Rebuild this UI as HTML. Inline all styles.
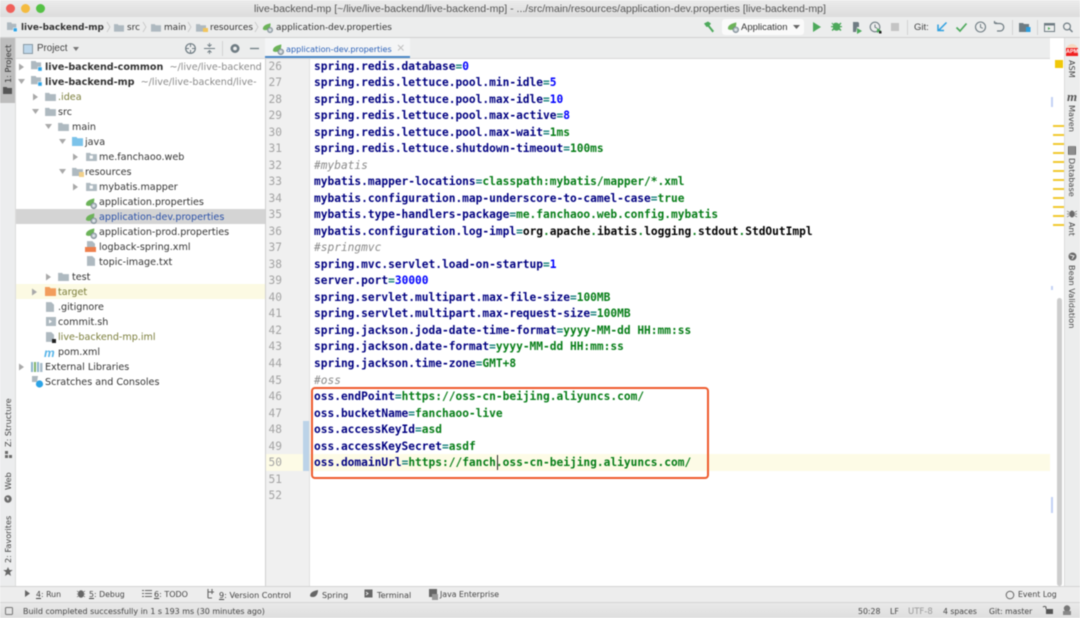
<!DOCTYPE html>
<html lang="en"><head><meta charset="utf-8"><title>IDE</title>
<style>
html,body{margin:0;padding:0;width:1080px;height:618px;overflow:hidden;background:#fff}
#r{position:relative;width:1080px;height:618px;overflow:hidden;filter:blur(.4px);font-family:"DejaVu Sans",sans-serif;font-size:9.6px;color:#333}
.a{position:absolute}
.t{position:absolute;white-space:pre;line-height:14px;height:14px}
.s{font-size:8.9px}
.u{font-size:8.1px;color:#444}
.w{font-size:7.8px;color:#444}
.c{position:absolute;left:314px;margin-top:.7px;white-space:pre;font:bold 11.2px/16px "DejaVu Sans Mono",monospace;color:#000080}
.n{position:absolute;width:26px;left:256px;margin-top:.7px;text-align:right;font:11.2px/16px "DejaVu Sans Mono",monospace;color:#a3a3a3}
.g{color:#067d17}.b{color:#0000ff}.k{color:#000}.e{color:#16807a}
.h{font-weight:normal;font-style:italic;color:#8a8a8a}
.v{position:absolute;white-space:pre;transform-origin:0 0;line-height:12px;font-size:8.15px;color:#444}
.m{position:absolute;left:1053px;width:11px;height:2px;background:#f2c92e}
svg{position:absolute;overflow:visible}
</style></head><body><div id="r">
<svg width="0" height="0" style="position:absolute"><defs>
<symbol id="f" viewBox="0 0 12 10"><path d="M0 1h4.500l1 1.300H12V10H0z" fill="#aeb9c0"/></symbol>
<symbol id="l" viewBox="0 0 13 13"><path d="M1 8.500C1 4 5 3 10 1.500 10.500 5 9 9 5.500 9.500 3.500 9.800 2 9.600 1 8.500z" fill="#6cb359"/><circle cx="9.500" cy="9.500" r="3" fill="#b9c3c9" stroke="#77858e" stroke-width=".9"/><circle cx="9.500" cy="9.500" r=".9" fill="#fff"/></symbol>
<symbol id="mod" viewBox="0 0 13 12"><path d="M0 0h5l1 1.500h5V9H0z" fill="#aeb9c0"/><rect x="7.500" y="6.500" width="4.500" height="4.500" fill="#2ba3e6" stroke="#fff" stroke-width=".6"/></symbol>
<symbol id="pk" viewBox="0 0 12 10"><path d="M0 1h4.500l1 1.300H12V10H0z" fill="#aeb9c0"/><rect x="4" y="4" width="3.500" height="3.500" fill="#fff"/></symbol>
<symbol id="doc" viewBox="0 0 9 11"><path d="M0 0h6l3 3v8H0z" fill="#aeb9c0"/></symbol>
</defs></svg>

<!-- title bar -->
<div class="a" style="left:0;top:0;width:1080px;height:17px;background:linear-gradient(#ececec,#dcdcdc)"></div>
<div class="a" style="left:6px;top:4px;width:9px;height:9px;border-radius:50%;background:#f0605a"></div>
<div class="a" style="left:21px;top:4px;width:9px;height:9px;border-radius:50%;background:#f4bb3f"></div>
<div class="a" style="left:36px;top:4px;width:9px;height:9px;border-radius:50%;background:#55c145"></div>
<div class="t" style="left:254px;top:2px;font:10.54px/14px 'Liberation Sans',sans-serif;color:#555;">live-backend-mp [~/live/live-backend/live-backend-mp] - .../src/main/resources/application-dev.properties [live-backend-mp]</div>

<!-- nav bar -->
<div class="a" style="left:0;top:17px;width:1080px;height:21px;background:#eceded;border-bottom:1px solid #d0d0d0;box-sizing:border-box"></div>
<svg style="left:7px;top:22px" width="11" height="11"><use href="#mod" width="11" height="11"/></svg>
<div class="t s" style="left:21px;top:21px;font-weight:bold;">live-backend-mp</div>
<svg style="left:114px;top:23px" width="10" height="9"><use href="#f" width="10" height="9"/></svg>
<div class="t s" style="left:127px;top:21px">src</div>
<svg style="left:151px;top:23px" width="10" height="9"><use href="#f" width="10" height="9"/></svg>
<div class="t s" style="left:164px;top:21px">main</div>
<svg style="left:196px;top:23px" width="10" height="9"><use href="#f" width="10" height="9"/></svg>
<div class="a" style="left:203px;top:28px;width:5px;height:4px;background:#f2c55c"></div>
<div class="t s" style="left:210px;top:21px">resources</div>
<svg style="left:262px;top:22px" width="11" height="11"><use href="#l" width="11" height="11"/></svg>
<div class="t s" style="left:276px;top:21px">application-dev.properties</div>
<svg style="left:0;top:0" width="270" height="38" fill="none" stroke="#c4c4c4" stroke-width=".8"><path d="M107 22l3 5-3 5M143 22l3 5-3 5M188 22l3 5-3 5M255 22l3 5-3 5"/></svg>

<!-- toolbar right -->
<svg style="left:702px;top:20px" width="14" height="14"><path d="M2 3.500L6 1.500l3 2-1.500 2L12 11l-1.500 1.500L6 6.800 4.500 7z" fill="#4da95b"/></svg>
<div class="a" style="left:722px;top:19px;width:82px;height:16px;background:#fafafa;border-radius:3px"></div>
<svg style="left:727px;top:21px" width="12" height="12"><use href="#l" width="12" height="12"/></svg>
<div class="t" style="left:741px;top:21px;font:9.5px/14px 'Liberation Sans',sans-serif;color:#333">Application</div>
<svg style="left:793px;top:25px" width="8" height="5"><path d="M0 0h7L3.500 4z" fill="#666"/></svg>
<svg style="left:0;top:0" width="1080" height="38">
<path d="M813 22v10l8-5z" fill="#4da95b"/>
<path d="M833 24a4 4 0 0 1 6 0l1.500-1.500 1 1-1.500 1.500v1h2v1.200h-2v1.300l1.500 1.500-1 1-1.500-1.200a4 4 0 0 1-5 0l-1.500 1.200-1-1 1.500-1.500v-1.300h-2v-1.200h2v-1l-1.500-1.500 1-1z" fill="#4da95b"/>
<path d="M853 22h5l1 1v4h-2l-1 5h-3z" fill="#6f7c83"/><path d="M857 28v6l5-3z" fill="#4da95b"/>
<circle cx="875" cy="27" r="4.800" fill="none" stroke="#6f7c83" stroke-width="1.100"/><path d="M875 24.500v2.700l2 1" fill="none" stroke="#6f7c83"/><path d="M877 28v5l4-2.500z" fill="#4da95b"/><rect x="879" y="31" width="2.500" height="2.500" fill="#222"/>
<rect x="891" y="23" width="8" height="8" fill="#c4c4c4"/>
<rect x="907" y="20" width="1" height="15" fill="#d2d2d2"/>
<path d="M946.500 22.500l-8 8M938 24.500v6h6" fill="none" stroke="#2d9fe0" stroke-width="1.500"/>
<path d="M956.500 27.500l3.500 3.500 6.500-7.500" fill="none" stroke="#4da95b" stroke-width="1.700"/>
<circle cx="980.500" cy="27" r="5" fill="none" stroke="#6f7c83" stroke-width="1.100"/><path d="M980.500 24v3.300l2.300 1" fill="none" stroke="#6f7c83"/>
<path d="M997 23h-2.500v-2M995 23.500h5a3.600 3.600 0 0 1 0 7.500h-3" fill="none" stroke="#6f7c83" stroke-width="1.200"/>
<rect x="1012" y="20" width="1" height="15" fill="#d2d2d2"/>
<path d="M1019 23h4l1 1h5v8h-10z" fill="#6f7c83"/><rect x="1026" y="27" width="4.500" height="5" fill="#2d9fe0"/>
<rect x="1037" y="20" width="1" height="15" fill="#d2d2d2"/>
<rect x="1044.500" y="23.500" width="10" height="8" fill="none" stroke="#6f7c83"/><rect x="1044.500" y="23.500" width="10" height="2" fill="#6f7c83"/><path d="M1048 27v3l2.500-1.500z" fill="#4da95b"/>
<circle cx="1067" cy="26.500" r="3.400" fill="none" stroke="#6f7c83" stroke-width="1.200"/><path d="M1069.500 29l3 3" stroke="#6f7c83" stroke-width="1.400"/>
</svg>
<div class="t" style="left:914px;top:21px;font:9.500px/14px 'Liberation Sans',sans-serif;color:#444">Git:</div>

<!-- left strip -->
<div class="a" style="left:0;top:38px;width:16px;height:549px;background:#ecedee;border-right:1px solid #dcdcdc;box-sizing:border-box"></div>
<div class="a" style="left:0;top:38px;width:15px;height:65px;background:#bdbdbd"></div>
<div class="v" style="left:2px;top:83px;transform:rotate(-90deg);color:#333">1: Project</div>
<svg style="left:3px;top:87px" width="9" height="7"><path d="M0 0h3.500l1 1H9v6H0z" fill="#555"/></svg>
<div class="v" style="left:2px;top:447px;transform:rotate(-90deg)">Z: Structure</div>
<svg style="left:5px;top:451px" width="7" height="7" fill="#6b6b6b"><rect width="3" height="3"/><rect y="4" width="3" height="3"/><rect x="4" y="4" width="3" height="3"/></svg>
<div class="v" style="left:2px;top:490px;transform:rotate(-90deg)">Web</div>
<svg style="left:4px;top:495px" width="8" height="8"><circle cx="4" cy="4" r="3.700" fill="#6b6b6b"/><path d="M2 2l3 1-1 3z" fill="#eee"/></svg>
<div class="v" style="left:2px;top:563px;transform:rotate(-90deg)">2: Favorites</div>
<svg style="left:3px;top:567px" width="10" height="9"><path d="M5 0l1.400 3h3.300L7 5.200 8 9 5 7 2 9l1-3.800L.3 3h3.300z" fill="#666"/></svg>

<!-- project panel header -->
<div class="a" style="left:16px;top:38px;width:249px;height:21px;background:#eceded"></div>
<svg style="left:23px;top:44px" width="10" height="10"><rect x=".5" y=".5" width="9" height="9" fill="#bcd6ea" stroke="#8a9aa5"/></svg>
<div class="t" style="left:37px;top:42px;font:9.800px/14px 'Liberation Sans',sans-serif;color:#444">Project</div>
<svg style="left:73px;top:47px" width="8" height="5"><path d="M0 0h6L3 4z" fill="#777"/></svg>
<svg style="left:0;top:0" width="270" height="60" fill="none" stroke="#6f7c83">
<circle cx="190.500" cy="48.500" r="4.800" stroke-width="1.200"/><path d="M190.500 44v3M190.500 50v3M186 48.500h3M192 48.500h3" />
<path d="M204 48.500h11M209.500 43v3M207.500 44.500l2 2 2-2M209.500 54v-3M207.500 52.500l2-2 2 2" stroke-width=".9"/>
<path d="M222.500 41v15" stroke="#d2d2d2"/>
<circle cx="235" cy="48.500" r="3.200" stroke-width="2.600"/>
<path d="M250 48.500h9" stroke-width="1.300"/></svg>
<div class="a" style="left:265px;top:38px;width:785px;height:21px;background:#eceded"></div>
<div class="a" style="left:16px;top:58px;width:1034px;height:1px;background:#d8d8d8"></div>

<!-- tab -->
<div class="a" style="left:265px;top:38px;width:145px;height:20px;background:#f4f5f6"></div>
<div class="a" style="left:265px;top:56px;width:145px;height:2px;background:#4a88c7"></div>
<svg style="left:272px;top:43px" width="12" height="12"><use href="#l" width="12" height="12"/></svg>
<div class="t" style="left:286px;top:42px;color:#2a60b8;font-size:8.1px">application-dev.properties</div>
<svg style="left:397px;top:44px" width="8" height="8"><path d="M1 1l5.500 5.500M6.500 1L1 6.500" stroke="#c0c0c0"/></svg>

<!-- tree -->
<div class="a" style="left:16px;top:59px;width:249px;height:528px;background:#fff"></div>
<div class="a" style="left:16px;top:209px;width:249px;height:15px;background:#d4d4d4"></div>
<div class="a" style="left:16px;top:284px;width:249px;height:15px;background:#fcfae3"></div>
<svg style="left:0;top:0" width="270" height="400" fill="#a9a9a9">
<path d="M19 63.500l5 3.500-5 3.500zM33 93.500l5 3.500-5 3.500zM73 153.500l5 3.500-5 3.500zM73 183.500l5 3.500-5 3.500zM46 273.500l5 3.500-5 3.500zM32 288.500l5 3.500-5 3.500zM19 363.500l5 3.500-5 3.500z"/>
<path d="M18 79h7l-3.500 5zM32 109h7l-3.500 5zM45 124h7l-3.500 5zM59 139h7l-3.500 5zM59 169h7l-3.500 5z"/>
</svg>
<svg style="left:31px;top:61px" width="12" height="11"><use href="#mod" width="12" height="11"/></svg>
<svg style="left:31px;top:76px" width="12" height="11"><use href="#mod" width="12" height="11"/></svg>
<svg style="left:45px;top:92px" width="11" height="9"><use href="#f" width="11" height="9"/></svg>
<svg style="left:45px;top:107px" width="11" height="9"><use href="#f" width="11" height="9"/></svg>
<svg style="left:58px;top:122px" width="11" height="9"><use href="#f" width="11" height="9"/></svg>
<svg style="left:72px;top:137px" width="11" height="9"><path d="M0 0h4.500l1 1.200H11V9H0z" fill="#7cc3ea"/></svg>
<svg style="left:86px;top:152px" width="11" height="9"><use href="#pk" width="11" height="9"/></svg>
<svg style="left:72px;top:167px" width="11" height="9"><use href="#f" width="11" height="9"/></svg>
<div class="a" style="left:79px;top:172px;width:5px;height:5px;background:#f2d08a"></div>
<svg style="left:86px;top:182px" width="11" height="9"><use href="#pk" width="11" height="9"/></svg>
<svg style="left:85px;top:197px" width="12" height="12"><use href="#l" width="12" height="12"/></svg>
<svg style="left:85px;top:212px" width="12" height="12"><use href="#l" width="12" height="12"/></svg>
<svg style="left:85px;top:227px" width="12" height="12"><use href="#l" width="12" height="12"/></svg>
<svg style="left:87px;top:241px" width="8" height="10"><use href="#doc" width="8" height="10"/></svg>
<div class="a" style="left:85px;top:247px;width:11px;height:5px;background:#ee7f4c"></div>
<svg style="left:87px;top:256px" width="8" height="10"><use href="#doc" width="8" height="10"/></svg>
<svg style="left:58px;top:272px" width="11" height="9"><use href="#f" width="11" height="9"/></svg>
<svg style="left:45px;top:287px" width="11" height="9"><path d="M0 0h4.500l1 1.200H11V9H0z" fill="#f29d5c"/></svg>
<svg style="left:46px;top:302px" width="8" height="10"><use href="#doc" width="8" height="10"/></svg>
<svg style="left:46px;top:317px" width="10" height="10"><rect width="10" height="9" fill="#aeb9c0"/><path d="M3 2.500l3 2-3 2z" fill="#fff"/></svg>
<svg style="left:46px;top:332px" width="8" height="10"><use href="#doc" width="8" height="10"/></svg>
<div class="a" style="left:52px;top:339px;width:4px;height:4px;background:#222"></div>
<div class="t" style="left:44px;top:346px;font:italic bold 12px/14px 'Liberation Sans',sans-serif;color:#56b4e9">m</div>
<svg style="left:31px;top:362px" width="12" height="10" fill="#8cb4cc"><rect width="2" height="10"/><rect x="3" width="2" height="10" fill="#7eb36c"/><rect x="6" width="2" height="10"/><rect x="9" y="1" width="2.500" height="9" fill="#a9bcc9"/></svg>
<svg style="left:31px;top:376px" width="13" height="12"><path d="M1 0h6l-1 6H1z" fill="#aeb9c0"/><circle cx="8.500" cy="8" r="3.600" fill="#2ba3e6"/></svg>

<div class="t" style="left:45px;top:61px"><b>live-backend-common</b><span style="color:#8a8a8a">  ~/live/live-backend</span></div>
<div class="t" style="left:45px;top:76px"><b>live-backend-mp</b><span style="color:#8a8a8a">  ~/live/live-backend/live-</span></div>
<div class="a" style="left:262px;top:59px;width:3px;height:30px;background:#fff"></div>
<div class="t" style="left:58px;top:91px;color:#7a7d3a">.idea</div>
<div class="t" style="left:58px;top:106px">src</div>
<div class="t" style="left:72px;top:121px">main</div>
<div class="t" style="left:85px;top:136px">java</div>
<div class="t" style="left:99px;top:151px">me.fanchaoo.web</div>
<div class="t" style="left:85px;top:166px">resources</div>
<div class="t" style="left:99px;top:181px">mybatis.mapper</div>
<div class="t" style="left:99px;top:196px">application.properties</div>
<div class="t" style="left:99px;top:211px;color:#2a50a8">application-dev.properties</div>
<div class="t" style="left:99px;top:226px">application-prod.properties</div>
<div class="t" style="left:99px;top:241px">logback-spring.xml</div>
<div class="t" style="left:99px;top:256px">topic-image.txt</div>
<div class="t" style="left:72px;top:271px">test</div>
<div class="t" style="left:58px;top:286px;color:#7a7d3a">target</div>
<div class="t" style="left:58px;top:301px">.gitignore</div>
<div class="t" style="left:58px;top:316px">commit.sh</div>
<div class="t" style="left:58px;top:331px;color:#7a7d3a">live-backend-mp.iml</div>
<div class="t" style="left:58px;top:346px">pom.xml</div>
<div class="t" style="left:45px;top:361px">External Libraries</div>
<div class="t" style="left:45px;top:376px">Scratches and Consoles</div>

<!-- gutter -->
<div class="a" style="left:265px;top:59px;width:45px;height:528px;background:#f0f0f0;border-left:1px solid #cfcfcf;border-right:1px solid #e0e0e0;box-sizing:border-box"></div>
<div class="a" style="left:266px;top:454px;width:43px;height:17px;background:#fdfbe6"></div>
<div class="a" style="left:303px;top:421px;width:6px;height:50px;background:#bcd3e8"></div>
<div class="a" style="left:310px;top:454px;width:740px;height:17px;background:#fdfbe6"></div>

<div class="n" style="top:58px">26</div><div class="n" style="top:74.500px">27</div><div class="n" style="top:91px">28</div><div class="n" style="top:107.600px">29</div><div class="n" style="top:124.100px">30</div><div class="n" style="top:140.600px">31</div><div class="n" style="top:157.100px">32</div><div class="n" style="top:173.600px">33</div><div class="n" style="top:190.200px">34</div><div class="n" style="top:206.700px">35</div><div class="n" style="top:223.200px">36</div><div class="n" style="top:239.700px">37</div><div class="n" style="top:256.200px">38</div><div class="n" style="top:272.800px">39</div><div class="n" style="top:289.300px">40</div><div class="n" style="top:305.800px">41</div><div class="n" style="top:322.300px">42</div><div class="n" style="top:338.800px">43</div><div class="n" style="top:355.400px">44</div><div class="n" style="top:371.900px">45</div><div class="n" style="top:388.400px">46</div><div class="n" style="top:404.900px">47</div><div class="n" style="top:421.400px">48</div><div class="n" style="top:438px">49</div><div class="n" style="top:454.500px">50</div><div class="n" style="top:471px">51</div><div class="n" style="top:487.500px">52</div>

<!-- code -->
<div class="c" style="top:58px">spring.redis.database<span class="e">=</span><span class="b">0</span></div>
<div class="c" style="top:74.500px">spring.redis.lettuce.pool.min-idle<span class="e">=</span><span class="b">5</span></div>
<div class="c" style="top:91px">spring.redis.lettuce.pool.max-idle<span class="e">=</span><span class="b">10</span></div>
<div class="c" style="top:107.600px">spring.redis.lettuce.pool.max-active<span class="e">=</span><span class="b">8</span></div>
<div class="c" style="top:124.100px">spring.redis.lettuce.pool.max-wait<span class="e">=</span><span class="g">1ms</span></div>
<div class="c" style="top:140.600px">spring.redis.lettuce.shutdown-timeout<span class="e">=</span><span class="g">100ms</span></div>
<div class="c h" style="top:157.100px">#mybatis</div>
<div class="c" style="top:173.600px">mybatis.mapper-locations<span class="e">=</span><span class="g">classpath:mybatis/mapper/*.xml</span></div>
<div class="c" style="top:190.200px">mybatis.configuration.map-underscore-to-camel-case<span class="e">=</span><span class="g">true</span></div>
<div class="c" style="top:206.700px">mybatis.type-handlers-package<span class="e">=</span><span class="g">me.fanchaoo.web.config.mybatis</span></div>
<div class="c" style="top:223.200px">mybatis.configuration.log-impl<span class="e">=</span><span class="k">org</span><span class="g">.</span><span class="k">apache</span><span class="g">.</span><span class="k">ibatis</span><span class="g">.</span><span class="k">logging</span><span class="g">.</span><span class="k">stdout</span><span class="g">.</span><span class="k">StdOutImpl</span></div>
<div class="c h" style="top:239.700px">#springmvc</div>
<div class="c" style="top:256.200px">spring.mvc.servlet.load-on-startup<span class="e">=</span><span class="b">1</span></div>
<div class="c" style="top:272.800px">server.port<span class="e">=</span><span class="b">30000</span></div>
<div class="c" style="top:289.300px">spring.servlet.multipart.max-file-size<span class="e">=</span><span class="g">100MB</span></div>
<div class="c" style="top:305.800px">spring.servlet.multipart.max-request-size<span class="e">=</span><span class="g">100MB</span></div>
<div class="c" style="top:322.300px">spring.jackson.joda-date-time-format<span class="e">=</span><span class="g">yyyy-MM-dd HH:mm:ss</span></div>
<div class="c" style="top:338.800px">spring.jackson.date-format<span class="e">=</span><span class="g">yyyy-MM-dd HH:mm:ss</span></div>
<div class="c" style="top:355.400px">spring.jackson.time-zone<span class="e">=</span><span class="g">GMT+8</span></div>
<div class="c h" style="top:371.900px">#oss</div>
<div class="c" style="top:388.400px">oss.endPoint<span class="e">=</span><span class="g">https://oss-cn-beijing.aliyuncs.com/</span></div>
<div class="c" style="top:404.900px">oss.bucketName<span class="e">=</span><span class="g">fanchaoo-live</span></div>
<div class="c" style="top:421.400px">oss.accessKeyId<span class="e">=</span><span class="g">asd</span></div>
<div class="c" style="top:438px">oss.accessKeySecret<span class="e">=</span><span class="g">asdf</span></div>
<div class="c" style="top:454.500px">oss.domainUrl<span class="e">=</span><span class="g">https://fanch.oss-cn-beijing.aliyuncs.com/</span></div>
<div class="a" style="left:497px;top:455px;width:1px;height:15px;background:#222"></div>
<div class="a" style="left:311px;top:387px;width:398px;height:92px;border:2px solid #ee5a2c;border-radius:4px;box-sizing:border-box"></div>

<!-- markers / scroll -->
<div class="a" style="left:1055px;top:60px;width:8px;height:8px;background:#f0c808"></div>
<div class="a" style="left:1051px;top:97px;width:2px;height:10px;background:#c3d2f5"></div>
<div class="a" style="left:1051px;top:286px;width:2px;height:4px;background:#c3d2f5"></div>
<div class="a" style="left:1051px;top:497px;width:2px;height:16px;background:#c3d2f5"></div>
<div class="m" style="top:125px"></div><div class="m" style="top:134px"></div><div class="m" style="top:143px"></div><div class="m" style="top:152px"></div><div class="m" style="top:161px"></div><div class="m" style="top:170px"></div><div class="m" style="top:179px"></div><div class="m" style="top:188px"></div><div class="m" style="top:197px"></div><div class="m" style="top:206px"></div><div class="m" style="top:215px"></div><div class="m" style="top:224px"></div>
<div class="a" style="left:1057px;top:298px;width:5px;height:288px;background:#cdcdcd;border-radius:3px"></div>

<!-- right strip -->
<div class="a" style="left:1064px;top:38px;width:16px;height:549px;background:#eceded;border-left:1px solid #dcdcdc;box-sizing:border-box"></div>
<div class="a" style="left:1066px;top:44px;width:12px;height:12px;border-radius:50%;background:#f6d8c0"></div>
<div class="t" style="left:1066px;top:48px;font:bold 5.500px/8px 'Liberation Sans',sans-serif;color:#fff;background:#f02020;height:8px;width:12px;overflow:hidden;text-align:center">APM</div>
<div class="v" style="left:1078px;top:60px;transform:rotate(90deg);color:#444">ASM</div>
<div class="t" style="left:1067px;top:90px;font:italic bold 13px/14px 'Liberation Serif',serif;color:#555">m</div>
<div class="v" style="left:1078px;top:105px;transform:rotate(90deg)">Maven</div>
<svg style="left:1068px;top:146px" width="8" height="9" fill="#6b6b6b"><rect width="8" height="9" rx="1"/><path d="M2 0v9M4 0v9M6 0v9" stroke="#eee" stroke-width=".5"/></svg>
<div class="v" style="left:1078px;top:158px;transform:rotate(90deg)">Database</div>
<svg style="left:1067px;top:210px" width="10" height="8" stroke="#6b6b6b" fill="#6b6b6b"><ellipse cx="5" cy="4" rx="2" ry="3"/><path d="M0 1l10 6M10 1L0 7M0 4h10" stroke-width=".7"/></svg>
<div class="v" style="left:1078px;top:222px;transform:rotate(90deg)">Ant</div>
<svg style="left:1068px;top:252px" width="9" height="9"><circle cx="4.500" cy="4.500" r="4" fill="#6b6b6b"/><path d="M2 3l4 1-2 3" stroke="#eee" fill="none"/></svg>
<div class="v" style="left:1078px;top:265px;transform:rotate(90deg)">Bean Validation</div>

<!-- bottom tool bar -->
<div class="a" style="left:0;top:586px;width:1080px;height:17px;background:#ededed;border-top:1px solid #d4d4d4;box-sizing:border-box"></div>
<div class="a" style="left:0;top:602px;width:1080px;height:16px;background:linear-gradient(#e9e9e9,#dedede);border-top:1px solid #d6d6d6;box-sizing:border-box"></div>
<svg style="left:0;top:585px" width="520" height="18" fill="#666">
<path d="M25 5v7l5-3.500z"/>
<ellipse cx="81" cy="9" rx="3" ry="3.800"/><path d="M77 6l8 6M85 6l-8 6M77 9h8" stroke="#666" stroke-width=".7"/>
<path d="M145 5.500h7M145 8.500h7M145 11.500h7" stroke="#666" stroke-width="1.100"/><path d="M142 5.500h2M142 8.500h2M142 11.500h2" stroke="#666"/>
<path d="M208 4v9M208 13h4M212 9V4M214 7h-6" stroke="#666" fill="none" stroke-width="1.100"/>
<path d="M310 11c0-4 4-5 8-6 0 4-2 7-5 7-1 0-2 0-3-1z"/>
<rect x="364.500" y="4.500" width="8" height="8"/><path d="M366 7l2 1.500-2 1.500" stroke="#eee" fill="none"/>
<path d="M429 4h8v8h-8z"/><rect x="432" y="9" width="6" height="6" fill="#999"/>
</svg>
<div class="t w" style="left:36px;top:588px"><u>4</u>: Run</div>
<div class="t w" style="left:89px;top:588px"><u>5</u>: Debug</div>
<div class="t w" style="left:154px;top:588px;font-size:8px"><u>6</u>: TODO</div>
<div class="t u" style="left:219px;top:588px"><u>9</u>: Version Control</div>
<div class="t u" style="left:322px;top:588px">Spring</div>
<div class="t u" style="left:377px;top:588px">Terminal</div>
<div class="t w" style="left:440px;top:588px">Java Enterprise</div>
<svg style="left:1005px;top:590px" width="10" height="10"><circle cx="5" cy="5" r="3.800" fill="none" stroke="#666"/></svg>
<div class="t w" style="left:1018px;top:588px">Event Log</div>

<!-- status bar -->
<svg style="left:5px;top:606px" width="10" height="10"><rect x=".5" y="1.500" width="7" height="7" rx="1" fill="none" stroke="#777"/></svg>
<div class="t w" style="left:23px;top:605px;font-size:7.95px">Build completed successfully in 1 s 193 ms (30 minutes ago)</div>
<div class="t w" style="left:858px;top:605px">50:28</div>
<div class="t w" style="left:890px;top:605px">LF</div>
<div class="t" style="left:908px;top:605px;font-size:8.500px;color:#999">UTF-8</div>
<div class="t" style="left:943px;top:605px;font-size:7.700px;color:#444">4 spaces</div>
<div class="t" style="left:989px;top:605px;font-size:7.700px;color:#444">Git: master</div>
<svg style="left:1043px;top:605px" width="10" height="10"><rect x="3" y="4" width="7" height="5" fill="#555"/><path d="M3 4V2a2 2 0 0 0-3 0" stroke="#555" fill="none"/></svg>
<svg style="left:1062px;top:605px" width="10" height="10"><circle cx="5" cy="3.500" r="3.200" fill="#777"/><rect x="1" y="6" width="8" height="4" fill="#888"/></svg>
</div></body></html>
